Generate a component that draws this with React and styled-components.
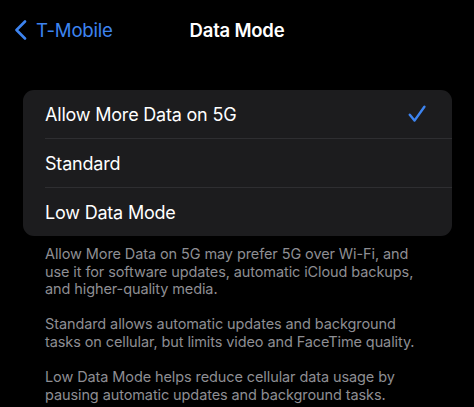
import React from 'react';
import styled, { createGlobalStyle } from 'styled-components';

const GlobalStyle = createGlobalStyle`
  html, body {
    margin: 0;
    padding: 0;
    background: #000000;
  }
  body {
    font-family: 'Inter', 'Liberation Sans', sans-serif;
    -webkit-font-smoothing: antialiased;
  }
`;

const Screen = styled.div`
  width: 474px;
  height: 407px;
  overflow: hidden;
  background: #000000;
  display: flex;
  flex-direction: column;
  & > * {
    flex-shrink: 0;
  }
`;

const NavBar = styled.div`
  height: 60px;
  display: grid;
  grid-template-columns: 1fr auto 1fr;
  align-items: center;
  padding: 0 14px;
`;

const BackButton = styled.div`
  display: flex;
  align-items: center;
  gap: 9px;
  color: #3d84f0;
  font-size: 18.6px;
  letter-spacing: -0.2px;
`;

const Title = styled.div`
  color: #ffffff;
  font-size: 18.5px;
  font-weight: 600;
  letter-spacing: -0.2px;
`;

const Card = styled.div`
  margin: 30px 22px 0 23px;
  background: #1c1c1e;
  border-radius: 11px;
  overflow: hidden;
`;

const Row = styled.div`
  height: 48px;
  margin-left: 22px;
  padding-right: 26px;
  display: flex;
  align-items: center;
  justify-content: space-between;
  color: #ffffff;
  font-size: 18px;
  letter-spacing: -0.2px;
  border-top: ${(props) => (props.first ? 'none' : '1px solid #2e2e31')};
`;

const Footer = styled.div`
  padding: 9px 40px 0 45px;
  color: #8e8e93;
  font-size: 14.5px;
  line-height: 17.6px;
  letter-spacing: -0.1px;
`;

const Para = styled.p`
  margin: 0 0 17.6px 0;
`;

const Chevron = () => (
  <svg width="13" height="20" viewBox="0 0 13 20" fill="none">
    <path
      d="M11 1.5 L2.5 10 L11 18.5"
      stroke="#3d84f0"
      strokeWidth="2.6"
      strokeLinecap="round"
      strokeLinejoin="round"
    />
  </svg>
);

const Check = () => (
  <svg width="18" height="18" viewBox="0 0 18 18" fill="none">
    <path
      d="M1.8 9.8 L6.5 15.6 L16.4 1.8"
      stroke="#3d84f0"
      strokeWidth="2.4"
      strokeLinecap="round"
      strokeLinejoin="round"
    />
  </svg>
);

const options = ['Allow More Data on 5G', 'Standard', 'Low Data Mode'];

const App = () => (
  <Screen>
    <GlobalStyle />
    <NavBar>
      <BackButton>
        <Chevron />
        T-Mobile
      </BackButton>
      <Title>Data Mode</Title>
      <div />
    </NavBar>
    <Card>
      {options.map((x, i) => (
        <Row key={x} first={i === 0}>
          {x}
          {i === 0 && <Check />}
        </Row>
      ))}
    </Card>
    <Footer>
      <Para>
        Allow More Data on 5G may prefer 5G over Wi-Fi, and use it for software
        updates, automatic iCloud backups, and higher-quality media.
      </Para>
      <Para>
        Standard allows automatic updates and background tasks on cellular, but
        limits video and FaceTime quality.
      </Para>
      <Para>
        Low Data Mode helps reduce cellular data usage by pausing automatic
        updates and background tasks.
      </Para>
    </Footer>
  </Screen>
);

export default App;
